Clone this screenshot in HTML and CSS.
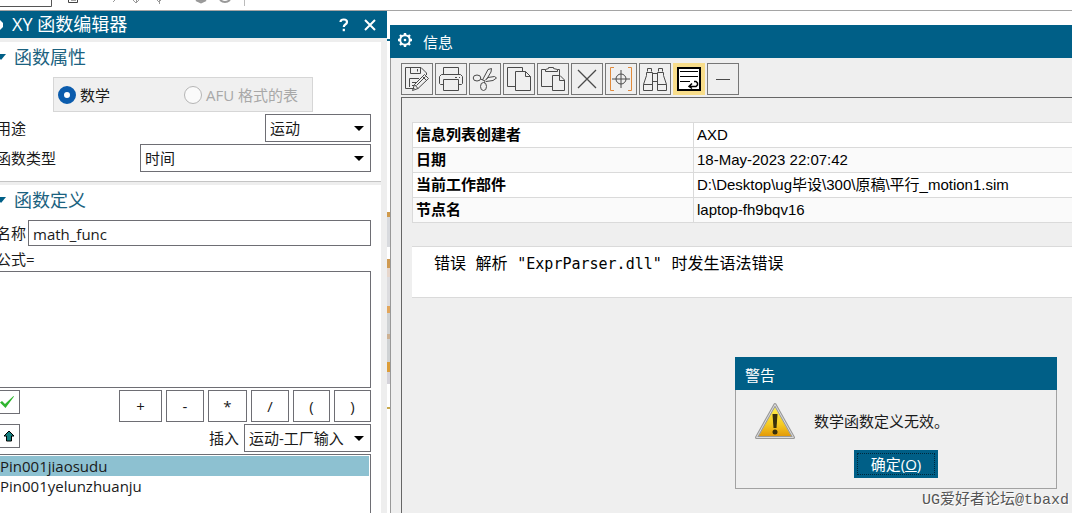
FILE: index.html
```html
<!DOCTYPE html>
<html lang="zh-CN">
<head>
<meta charset="utf-8">
<title>XY 函数编辑器</title>
<link rel="stylesheet" href="styles.css">
</head>
<body>
<header class="app-bar">
  <svg class="app-icons" width="260" height="10" viewBox="0 0 260 10" fill="none" stroke="#999" aria-hidden="true">
    <path d="M0 6.500H51.500V0" stroke="#555"/>
    <path d="M68.500 0V2.500H77.500V0M71 0h5" stroke="#444"/>
    <path d="M115 0l-2 2M133 0l3 3 3-3M136.500 0v3M157 0l2 2 2-2M159.500 0v4"/>
    <path d="M196 0l5 2.500 5-2.500M198 0h6" stroke-width="2"/>
    <path d="M220 0q5 4 10 0" stroke-width="2"/>
    <path d="M244.500 0V6" stroke="#bbb"/>
  </svg>
</header>
<div class="desktop">
  <section class="editor">
    <header class="editor-title">
      <svg width="4" height="12" viewBox="0 0 4 12" aria-hidden="true"><path d="M0 1L3 4V8L0 11z" fill="#fff"/></svg>
      <h1 class="title-text">XY 函数编辑器</h1>
      <button class="title-button" type="button" aria-label="帮助">
        <svg width="10" height="14" viewBox="0 0 10 14" fill="none" stroke="#fff" stroke-width="2.200"><path d="M1.500 4Q1.500 1.500 4.800 1.500Q8 1.500 8 4Q8 5.500 6.300 6.500Q4.800 7.400 4.800 9"/><path d="M4.800 10.800V13.200"/></svg>
      </button>
      <button class="title-button" type="button" aria-label="关闭">
        <svg width="14" height="14" viewBox="0 0 14 14" stroke="#fff" stroke-width="2"><path d="M2 2L12 12M12 2L2 12"/></svg>
      </button>
    </header>
    <form class="editor-body">
      <section class="group">
        <h2 class="group-title"><svg width="10" height="6" viewBox="0 0 10 6" aria-hidden="true"><path d="M0 0H10L5 6z" fill="#005f87"/></svg>函数属性</h2>
        <div class="radio-box">
          <label class="radio"><input type="radio" name="kind" checked>数学</label>
          <label class="radio off"><input type="radio" name="kind" disabled>AFU 格式的表</label>
        </div>
        <div class="row">
          <label for="usage">用途</label>
          <span class="pick pick-short"><select id="usage"><option>运动</option></select><svg width="10" height="5" viewBox="0 0 10 5" aria-hidden="true"><path d="M0 0H10L5 5z"/></svg></span>
        </div>
        <div class="row">
          <label for="type">函数类型</label>
          <span class="pick pick-long"><select id="type"><option>时间</option></select><svg width="10" height="5" viewBox="0 0 10 5" aria-hidden="true"><path d="M0 0H10L5 5z"/></svg></span>
        </div>
      </section>
      <section class="group">
        <h2 class="group-title"><svg width="10" height="6" viewBox="0 0 10 6" aria-hidden="true"><path d="M0 0H10L5 6z" fill="#005f87"/></svg>函数定义</h2>
        <div class="name-row">
          <label for="name">名称</label>
          <input class="name-input" id="name" type="text" value="math_func">
        </div>
        <label class="formula-label" for="formula">公式=</label>
        <textarea class="formula" id="formula"></textarea>
        <div class="tools">
          <button class="small-button" type="button" aria-label="检查"><svg width="16" height="14" viewBox="0 0 16 14"><path d="M1 7.500L3 6L6 9L14.500 1L15 1.500L6.500 13z" fill="#2fb52f"/></svg></button>
          <div class="keys">
            <button class="key" type="button">+</button>
            <button class="key" type="button">-</button>
            <button class="key" type="button">*</button>
            <button class="key" type="button">/</button>
            <button class="key" type="button">(</button>
            <button class="key" type="button">)</button>
          </div>
        </div>
        <div class="tools">
          <button class="small-button" type="button" aria-label="上移"><svg width="12" height="12" viewBox="0 0 12 12"><path d="M6 1L11 6H8.500V11H3.500V6H1z" fill="#148080" stroke="#000"/></svg></button>
          <div class="insert">
            <label for="insert">插入</label>
            <span class="pick pick-insert"><select id="insert"><option>运动-工厂输入</option></select><svg width="10" height="5" viewBox="0 0 10 5" aria-hidden="true"><path d="M0 0H10L5 5z"/></svg></span>
          </div>
        </div>
        <select class="list" size="3" aria-label="函数列表">
          <option selected>Pin001jiaosudu</option>
          <option>Pin001yelunzhuanju</option>
        </select>
      </section>
    </form>
  </section>
  <div class="sliver"></div>
  <main class="info">
    <header class="info-title">
      <svg width="16" height="16" viewBox="0 0 16 16" fill="none" stroke="#fff" aria-hidden="true"><circle cx="8" cy="8" r="4.800" stroke-width="2"/><circle cx="8" cy="8" r="1.300" fill="#fff" stroke="none"/><path d="M8 1V3M8 13V15M1 8H3M13 8H15M3 3L4.500 4.500M11.500 11.500L13 13M13 3L11.500 4.500M4.500 11.500L3 13" stroke-width="2.400"/></svg>
      <h2 class="info-name">信息</h2>
    </header>
    <div class="toolbar">
      <button class="tool" type="button" aria-label="另存为"><svg width="26" height="26" viewBox="0 0 26 26"><path d="M10.500 22.500H1.500V1.500H17L22.500 7V9M6.500 1.500V7.500H16.500V1.500M13.500 3V5.500M5.500 21V12.500H15M8 16.500H12M8 19.500H10M8.500 24.500L10.500 18.500L20.500 8.500L24.500 12.500L14 22.500zM10.500 18.500L14 22.500M12.500 19.500L21.500 10.500M18.500 10.500L22.500 14.500"/></svg></button>
      <button class="tool" type="button" aria-label="打印"><svg width="26" height="26" viewBox="0 0 26 26"><path d="M5.500 8.500V1.500H20.500V8.500M5.500 18.500H2.500L1.500 17.500V10.500L3.500 8.500H22.500L24.500 10.500V17.500L23.500 18.500H20.500M5.500 13.500H20.500V24.500H5.500zM17 11.500H19M21 11.500H22"/></svg></button>
      <button class="tool" type="button" aria-label="剪切"><svg width="26" height="26" viewBox="0 0 26 26"><ellipse cx="5" cy="12" rx="3.800" ry="3"/><ellipse cx="11.500" cy="20.500" rx="3" ry="4"/><path d="M8.500 13L13 15L12.500 17M10.500 14L16 3.500L19.500 2.500L19 6L14.500 13.500M13 14.500L16 11.500L22.500 10.500L24.500 12L21 14.500L14 15.500"/></svg></button>
      <button class="tool" type="button" aria-label="复制"><svg width="26" height="26" viewBox="0 0 26 26"><path d="M9.500 20.500H1.500V1.500H16.500V5.500M9.500 5.500H19.500L24.500 10.500V24.500H9.500zM19.500 5.500V10.500H24.500"/></svg></button>
      <button class="tool" type="button" aria-label="粘贴"><svg width="26" height="26" viewBox="0 0 26 26"><path d="M12.500 20.500H1.500V3.500H5.500M17.500 3.500H19.500V9M5.500 5.500V3.500L8.500 2.500V1.500H13.500V2.500L17.500 3.500V5.500zM12.500 9.500H20L24.500 14V24.500H12.500zM19.500 9.500V14.500H24.500"/></svg></button>
      <button class="tool" type="button" aria-label="删除"><svg width="26" height="26" viewBox="0 0 26 26"><path d="M4 4L22 22M22 4L4 22" stroke-width="1.300"/></svg></button>
      <button class="tool" type="button" aria-label="定位"><svg width="26" height="26" viewBox="0 0 26 26"><path d="M6 1.500H2.500V24.500H6M20 1.500H23.500V24.500H20" stroke="#e08a3c"/><circle cx="13" cy="13" r="5"/><path d="M4 13H22M13 4V22"/></svg></button>
      <button class="tool" type="button" aria-label="查找"><svg width="26" height="26" viewBox="0 0 26 26"><path d="M5.500 5.500V2.500H9.500V5.500M16.500 5.500V2.500H20.500V5.500M4.500 6.500H10.500V24.500H1.500V18.500L4.500 9.500zM15.500 6.500H21.500V9.500L24.500 18.500V24.500H15.500zM10.500 7.500H15.500M10.500 15.500H15.500M1.500 18.500H10.500M15.500 18.500H24.500"/></svg></button>
      <button class="tool tool-on" type="button" aria-label="自动换行"><svg width="26" height="26" viewBox="0 0 26 26"><path d="M2 2H24V24H2z" fill="#fff" stroke="#000" stroke-width="2"/><path d="M4 5.500H22M4 10.500H22M4 15.500H14" stroke="#000"/><path d="M18 15.500H20L21.500 17V19L20 20.500H13M16 17.500L13 20.500L16 22.500" stroke="#000" stroke-width="1.500"/></svg></button>
      <button class="tool" type="button" aria-label="最小化"><svg width="26" height="26" viewBox="0 0 26 26"><path d="M6 13.500H20"/></svg></button>
    </div>
    <div class="report">
      <table class="facts">
        <tr><th scope="row">信息列表创建者</th><td>AXD</td></tr>
        <tr><th scope="row">日期</th><td>18-May-2023 22:07:42</td></tr>
        <tr><th scope="row">当前工作部件</th><td>D:\Desktop\ug毕设\300\原稿\平行_motion1.sim</td></tr>
        <tr><th scope="row">节点名</th><td>laptop-fh9bqv16</td></tr>
      </table>
      <p class="message">错误 解析 <code>"ExprParser.dll"</code> 时发生语法错误</p>
    </div>
  </main>
</div>
<div class="alert" role="alertdialog" aria-labelledby="alert-title">
  <h2 class="alert-title" id="alert-title">警告</h2>
  <div class="alert-body">
    <div class="alert-message">
      <svg width="42" height="38" viewBox="0 0 42 38" aria-hidden="true">
        <defs><linearGradient id="warn" x1="0" y1="0" x2="0" y2="1"><stop offset="0" stop-color="#fff04a"/><stop offset="0.600" stop-color="#f4c922"/><stop offset="1" stop-color="#e39a08"/></linearGradient></defs>
        <path d="M21 2.500L39.500 35.500H2.500z" fill="#bbb" stroke="#999" stroke-width="3" stroke-linejoin="round"/>
        <path d="M21 2.500L39.500 35.500H2.500z" fill="none" stroke="#ddd" stroke-linejoin="round"/>
        <path d="M21 5.500L37 34H5z" fill="url(#warn)"/>
        <path d="M18.500 12H23.500L22.500 26H19.500z" fill="#38300c"/><circle cx="21" cy="30" r="2.500" fill="#38300c"/>
      </svg>
      <p class="alert-text">数学函数定义无效。</p>
    </div>
    <button class="ok" type="button">确定(<u>O</u>)</button>
  </div>
</div>
<p class="watermark">UG爱好者论坛@tbaxd</p>
</body>
</html>
```

FILE: styles.css
```css
* {
  box-sizing: border-box;
}

body {
  margin: 0;
  height: 100vh;
  display: flex;
  flex-direction: column;
  overflow: hidden;
  position: relative;
  background: #fff;
  color: #1a1a1a;
  font: 15px/20px "Open Sans", "Noto Sans CJK SC", sans-serif;
}

h1, h2, p {
  margin: 0;
  font-weight: 400;
}

button, input, select, textarea {
  margin: 0;
  font: inherit;
  color: inherit;
}

svg {
  display: block;
  flex: none;
}

.app-bar {
  flex: none;
  height: 11px;
  border-bottom: 1px solid #a5a5a5;
}

.desktop {
  flex: 1;
  min-height: 0;
  display: flex;
}

/* Function editor */

.editor {
  flex: none;
  width: 36.1%;
  display: flex;
  flex-direction: column;
  background: #eee;
}

.editor-title {
  flex: none;
  height: 27px;
  display: flex;
  align-items: center;
  gap: 8px;
  padding-right: 8px;
  background: #005f87;
  color: #fff;
}

.title-text {
  flex: 1;
  font-size: 18px;
  line-height: 27px;
}

.title-button {
  display: grid;
  place-items: center;
  width: 18px;
  height: 18px;
  padding: 0;
  border: 0;
  background: none;
}

.editor-body {
  flex: 1;
  min-height: 0;
  margin: 4px 6px 0 -4px;
  display: flex;
  flex-direction: column;
  gap: 3px;
}

.group {
  flex: none;
  padding-right: 10px;
  background: #fff;
}

.group:first-child {
  padding-bottom: 9px;
  border-bottom: 1px solid #c4c4c4;
}

.group-title {
  display: flex;
  align-items: center;
  gap: 8px;
  height: 35px;
  padding-bottom: 5px;
  color: #1b6280;
  font-size: 18px;
}

.radio-box {
  display: flex;
  align-items: center;
  gap: 74px;
  width: 260px;
  height: 35px;
  margin: 0 0 2px 57px;
  padding: 0 4px;
  border: 1px solid #d6d6d6;
  background: #f0f0f0;
}

.radio {
  display: flex;
  align-items: center;
  gap: 4px;
}

.radio input {
  appearance: none;
  width: 18px;
  height: 18px;
  border: 1px solid #b5b5b5;
  border-radius: 50%;
  background: #fafafa;
}

.radio input:checked {
  border: 6px solid #0b5cad;
  background: #fff;
}

.off {
  color: #a8a8a8;
}

.row {
  display: flex;
  align-items: center;
  justify-content: space-between;
}

.row + .row {
  margin-top: 2px;
}

.pick {
  display: grid;
  align-items: center;
}

.pick select {
  grid-area: 1 / 1;
  appearance: none;
  height: 28px;
  padding: 0 4px;
  border: 1px solid #6e6e74;
  border-radius: 0;
  background: #fff;
}

.pick svg {
  grid-area: 1 / 1;
  justify-self: end;
  margin-right: 7px;
  pointer-events: none;
}

.pick-short {
  width: 106px;
}

.pick-long {
  width: 231px;
}

.pick-insert {
  width: 127px;
}

.name-row {
  display: flex;
  align-items: center;
  gap: 2px;
}

.name-input {
  flex: 1;
  min-width: 0;
  height: 26px;
  padding: 2px 4px 0;
  border: 1px solid #6e6e74;
}

.formula-label {
  display: block;
  padding: 3px 0 2px;
}

.formula {
  display: block;
  width: 100%;
  height: 117px;
  border: 1px solid #6e6e74;
  resize: none;
}

.tools {
  display: flex;
  align-items: flex-start;
  justify-content: space-between;
  margin-top: 2px;
}

.small-button {
  display: flex;
  align-items: center;
  justify-content: flex-end;
  width: 24px;
  height: 24px;
  padding: 0 4px;
  border: 1px solid #6e6e74;
  background: #fff;
}

.keys {
  display: grid;
  grid-template-columns: 43px 38px 39px 38px 37px 37px;
  gap: 4px;
}

.key {
  height: 32px;
  padding: 0;
  border: 1px solid #6e6e74;
  background: #fff;
}

.insert {
  display: flex;
  align-items: center;
  gap: 5px;
}

.list {
  display: block;
  width: 100%;
  height: 64px;
  margin-top: 2px;
  padding: 1px;
  border: 1px solid #6e6e74;
  border-radius: 0;
  background: #fff;
  overflow: hidden;
}

.list option {
  min-height: 20px;
  padding: 0 2px;
  line-height: 20px;
}

.list option:checked {
  background: #8dc1d1 linear-gradient(#8dc1d1, #8dc1d1);
  color: #1a1a1a;
}

/* Part of the window behind, seen between the two panels */

.sliver {
  flex: none;
  width: 3px;
  background: linear-gradient(
    #fff 28px, #005f87 28px, #005f87 30px, #fff 30px, #fff 201px,
    #d09a4c 201px, #d09a4c 206px, #d8dade 206px, #d8dade 236px,
    #fff 236px, #fff 248px, #cf9a52 248px, #cf9a52 257px,
    #e6d6cc 257px, #e6d6cc 266px, #dcdcdf 266px, #dcdcdf 295px,
    #e2a65c 295px, #e2a65c 302px, #cfd2d4 302px, #cfd2d4 323px,
    #cdb193 323px, #cdb193 328px, #cfd2d4 328px, #cfd2d4 351px,
    #dc9d3a 351px, #dc9d3a 361px, #d5d3da 361px, #d5d3da 373px,
    #fff 373px, #fff 396px, #c9a94c 396px, #c9a94c 398px, #fff 398px);
}

/* Information window */

.info {
  flex: 1;
  min-width: 0;
  margin-top: 14px;
  display: flex;
  flex-direction: column;
  background: #efefef;
  border-left: 1px solid #999;
}

.info-title {
  flex: none;
  display: flex;
  align-items: center;
  gap: 10px;
  height: 33px;
  margin-left: -1px;
  padding: 0 7px;
  background: #005f87;
  color: #fff;
}

.info-title svg {
  margin-bottom: 3px;
}

.info-name {
  font-size: 15px;
}

.toolbar {
  flex: none;
  display: flex;
  gap: 2px;
  padding: 5px 10px 2px;
}

.tool {
  display: grid;
  place-items: center;
  width: 32px;
  height: 32px;
  padding: 0;
  border: 1px solid #777;
  background: #efefef;
}

.tool svg {
  fill: none;
  stroke: #4a4a4a;
}

.tool-on {
  border-color: #f8dd8a;
  background: #f8dd8a;
}

.report {
  flex: 1;
  margin-left: 10px;
  padding: 24px 0 0 10px;
  border: solid #666;
  border-width: 1px 0 0 1px;
}

.facts {
  width: 100%;
  border-collapse: collapse;
  color: #000;
  font: 15px/20px "Liberation Sans", "Noto Sans CJK SC", sans-serif;
}

.facts tr {
  height: 25px;
  background: #fff;
}

.facts tr:nth-child(even) {
  background: #fafafa;
}

.facts th,
.facts td {
  padding: 0 3px;
  border: 1px solid #dadada;
  border-right: 0;
  text-align: left;
}

.facts th {
  width: 281px;
}

.message {
  height: 52px;
  margin-top: 23px;
  padding: 7px 22px;
  border: solid #dadada;
  border-width: 1px 0;
  background: #fff;
  color: #000;
  font: 16px/20px "DejaVu Sans Mono", "Noto Sans CJK SC", monospace;
  white-space: nowrap;
}

.message code {
  font: 15px/20px "DejaVu Sans Mono", monospace;
}

/* Warning dialog, floating over the window */

.alert {
  position: absolute;
  right: 15px;
  bottom: 24px;
  width: 322px;
  border: 1px solid #a2a2a2;
  border-top: 0;
  background: #efefef;
}

.alert-title {
  height: 33px;
  margin: 0 -1px;
  padding: 2px 10px 0;
  background: #005f87;
  color: #fff;
  font-size: 15px;
  line-height: 32px;
}

.alert-body {
  display: flex;
  flex-direction: column;
  align-items: center;
  gap: 10px;
  padding: 12px 18px 10px;
}

.alert-message {
  align-self: stretch;
  display: flex;
  align-items: center;
  gap: 18px;
}

.ok {
  height: 28px;
  width: 84px;
  padding: 0;
  border: 0;
  background: #005f87;
  color: #fff;
  outline: 1px dotted #00283c;
  outline-offset: -4px;
}

.watermark {
  position: absolute;
  right: 3px;
  bottom: 2px;
  color: #555;
  text-shadow: 1px 1px 0 #fff;
  font: 15px/20px "Liberation Mono", "Noto Sans CJK SC", monospace;
}
```
